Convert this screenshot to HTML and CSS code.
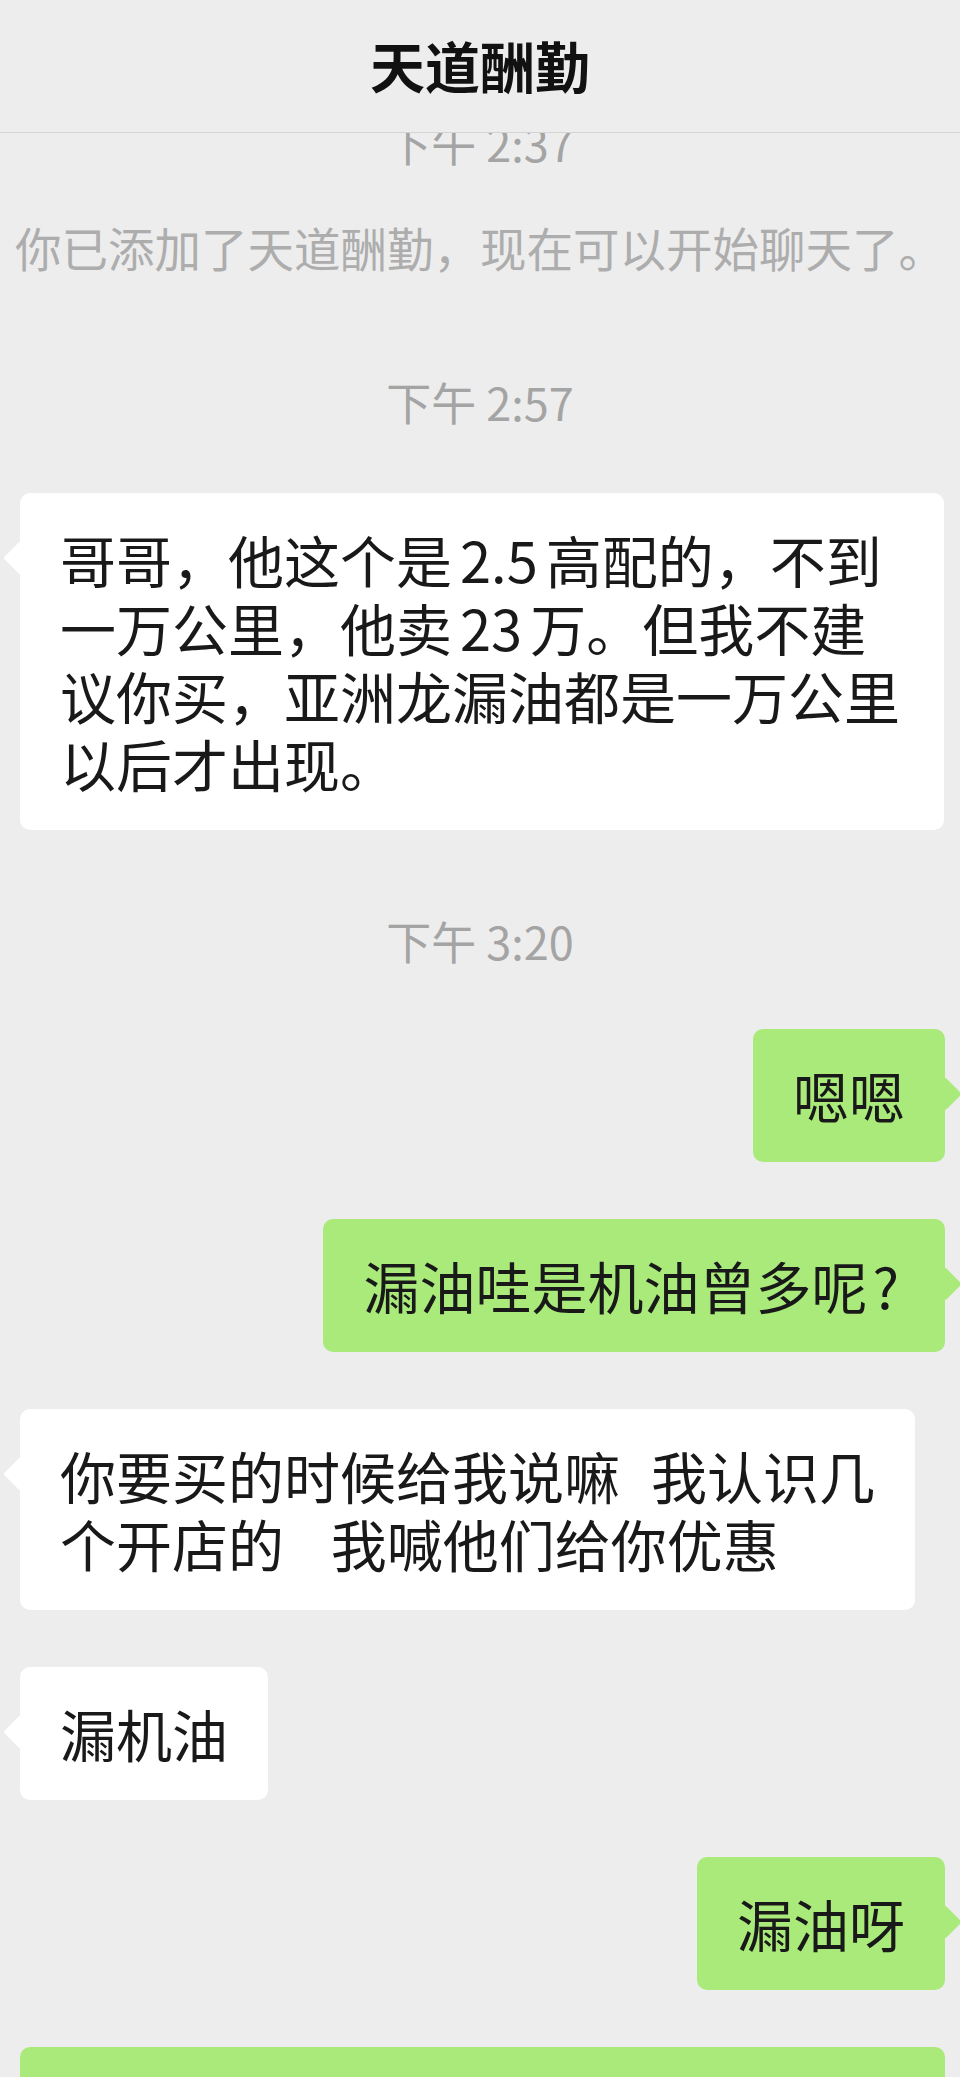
FILE: index.html
```html
<!DOCTYPE html>
<html lang="zh-CN">
<head>
<meta charset="utf-8">
<title>天道酬勤</title>
<link rel="stylesheet" href="styles.css">
</head>
<body>
<div class="app">
  <header class="nav"><h1 class="title">天道酬勤</h1></header>
  <main class="chat">
    <div class="time time-first">下午 2:37</div>
    <div class="system">你已添加了天道酬勤，现在可以开始聊天了。</div>
    <div class="time time-second">下午 2:57</div>
    <div class="row left after-time"><div class="bubble white wide">哥哥，他这个是<span class="num">2.5</span>高配的，不到<br>一万公里，他卖<span class="num">23</span>万。但我不建<br>议你买，亚洲龙漏油都是一万公里<br>以后才出现。</div></div>
    <div class="time time-third">下午 3:20</div>
    <div class="row right after-time-2"><div class="bubble green">嗯嗯</div></div>
    <div class="row right"><div class="bubble green">漏油哇是机油曾多呢<span class="q">?</span></div></div>
    <div class="row left"><div class="bubble white spaced">你要买的时候给我说嘛  我认识几<br>个开店的   我喊他们给你优惠</div></div>
    <div class="row left"><div class="bubble white">漏机油</div></div>
    <div class="row right"><div class="bubble green">漏油呀</div></div>
    <div class="row right"><div class="bubble green full"></div></div>
  </main>
</div>
</body>
</html>
```

FILE: styles.css
```css
html, body {
  margin: 0;
  padding: 0;
  background: #ededed;
}

body {
  font-family: "Noto Sans CJK SC", "Noto Sans", sans-serif;
  color: #191919;
}

.app {
  width: 960px;
  height: 2077px;
  overflow: hidden;
  display: flex;
  flex-direction: column;
  background: #ededed;
}

.nav {
  flex-shrink: 0;
  height: 133px;
  box-sizing: border-box;
  padding-bottom: 4px;
  border-bottom: 1px solid #d4d4d4;
  display: flex;
  align-items: center;
  justify-content: center;
  background: #ededed;
  position: relative;
  z-index: 2;
}

.title {
  margin: 0;
  font-size: 55px;
  font-weight: 700;
  line-height: 1;
  color: #111;
}

.chat {
  flex: 1;
  display: flex;
  flex-direction: column;
  overflow: hidden;
}

.time {
  font-size: 45px;
  line-height: 60px;
  text-align: center;
  color: #a4a4a4;
}

.time-first {
  margin-top: -20px;
}

.time-second {
  margin-top: 95px;
}

.time-third {
  margin-top: 81px;
}

.system {
  margin-top: 44px;
  font-size: 46.5px;
  line-height: 60px;
  text-align: center;
  color: #adadad;
}

.row {
  display: flex;
  margin-top: 57px;
  flex-shrink: 0;
}

.row.after-time {
  margin-top: 61px;
}

.row.after-time-2 {
  margin-top: 58px;
}

.row.left {
  justify-content: flex-start;
  padding-left: 20px;
}

.row.right {
  justify-content: flex-end;
  padding-right: 15px;
}

.bubble {
  position: relative;
  font-size: 56px;
  line-height: 68px;
  padding: 32px 40px 33px;
  border-radius: 10px;
  white-space: pre;
}

.bubble.wide {
  padding-right: 44px;
}

.bubble.spaced {
  word-spacing: 3px;
}

.bubble.white {
  background: #ffffff;
}

.bubble.green {
  background: #a9ea7b;
}

.bubble::before {
  content: "";
  position: absolute;
  top: 53px;
  width: 24px;
  height: 24px;
  background: inherit;
  border-radius: 3px;
  transform: rotate(45deg);
}

.bubble.white::before {
  left: -12px;
}

.bubble.green::before {
  right: -12px;
}

.bubble.full {
  flex: 1;
  margin-left: 20px;
  height: 200px;
}

.num {
  margin: 0 8px;
}

.q {
  margin: 0 6px 0 5px;
}
```
